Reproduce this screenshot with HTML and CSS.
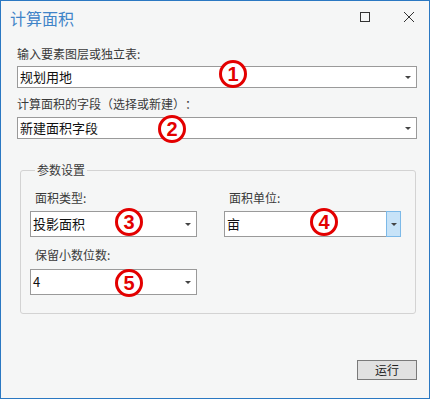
FILE: index.html
```html
<!DOCTYPE html>
<html lang="zh-CN">
<head>
<meta charset="utf-8">
<title>计算面积</title>
<link rel="stylesheet" href="styles.css">
</head>
<body>
<div class="window">
  <div class="titlebar">
    <span class="title">计算面积</span>
    <div class="controls">
      <svg class="ctl" width="12" height="12" viewBox="0 0 12 12"><rect x="1.5" y="1.5" width="9" height="9" fill="none" stroke="#333" stroke-width="1"/></svg>
      <svg class="ctl" width="12" height="12" viewBox="0 0 12 12"><path d="M1 1 L11 11 M11 1 L1 11" stroke="#333" stroke-width="1" fill="none"/></svg>
    </div>
  </div>
  <div class="content">
    <div class="label">输入要素图层或独立表:</div>
    <div class="select wide"><span class="val">规划用地</span><span class="arrow"></span></div>
    <div class="label second">计算面积的字段（选择或新建）：</div>
    <div class="select wide"><span class="val">新建面积字段</span><span class="arrow"></span></div>

    <fieldset class="group">
      <legend>参数设置</legend>
      <div class="grid">
        <div class="field">
          <div class="label sub">面积类型:</div>
          <div class="select tall"><span class="val">投影面积</span><span class="arrow"></span></div>
        </div>
        <div class="field">
          <div class="label sub">面积单位:</div>
          <div class="select tall active"><span class="val">亩</span><span class="btn"><span class="arrow"></span></span></div>
        </div>
        <div class="field row2">
          <div class="label sub">保留小数位数:</div>
          <div class="select tall"><span class="val">4</span><span class="arrow"></span></div>
        </div>
      </div>
    </fieldset>

    <div class="footer"><button class="run">运行</button></div>
  </div>

  <span class="mark m1">1</span>
  <span class="mark m2">2</span>
  <span class="mark m3">3</span>
  <span class="mark m4">4</span>
  <span class="mark m5">5</span>
</div>
</body>
</html>
```
FILE: styles.css
```css
* { box-sizing: border-box; }
html, body { margin: 0; padding: 0; background: #ffffff; }
body { font-family: "Noto Sans CJK SC", "Noto Sans", sans-serif; }

.window {
  position: relative;
  width: 430px;
  height: 399px;
  border: 1px solid #2a78c2;
  background: #f5f6f6;
}

.titlebar {
  height: 34px;
  display: flex;
  align-items: center;
  justify-content: space-between;
  padding: 0 0 0 9px;
}
.title {
  font-size: 16px;
  color: #3f84c8;
  line-height: 20px;
  margin-top: -1px;
}
.controls {
  display: flex;
  align-items: center;
  gap: 32px;
  padding-right: 14px;
  margin-top: -2px;
}
.ctl { display: block; }

.content {
  padding: 11px 0 0 16px;
}

.label {
  font-size: 12px;
  line-height: 16px;
  color: #3a3a3a;
  height: 16px;
  margin-bottom: 4px;
  white-space: nowrap;
}
.label.second { margin-top: 8px; margin-bottom: 5px; text-spacing-trim: space-all; }

.select {
  position: relative;
  display: flex;
  align-items: center;
  background: #fff;
  border: 1px solid #9a9a9a;
  height: 22px;
  padding-left: 2px;
  font-size: 13px;
  color: #111;
}
.select.wide { width: 400px; }
.select.tall { height: 26px; }
.val { flex: 1; line-height: 18px; }

.arrow {
  width: 0;
  height: 0;
  border-left: 3px solid transparent;
  border-right: 3px solid transparent;
  border-top: 3px solid #444;
  margin-right: 5px;
  margin-top: 1px;
}
.select.active { border-right: none; }
.select.active .btn {
  align-self: stretch;
  width: 15px;
  margin: -1px 0;
  background: #c7e3f8;
  border: 1px solid #7cb9e8;
  display: flex;
  align-items: center;
  justify-content: center;
}
.select.active .btn .arrow { margin: 1px 0 0 0; }

.group {
  width: 396px;
  margin: 23px 0 0 3px;
  padding: 12px 0 18px 9px;
  border: 1px solid #d3d3d3;
  border-radius: 3px;
  min-width: 0;
}
.group legend {
  font-size: 12px;
  line-height: 16px;
  color: #3a3a3a;
  padding: 0 2px;
  margin-left: 5px;
}

.grid {
  display: grid;
  grid-template-columns: 167px 177px;
  column-gap: 27px;
  row-gap: 10px;
}
.label.sub { padding-left: 5px; margin-bottom: 5px; }
.row2 .label.sub { margin-bottom: 6px; }
.row2 { grid-column: 1; }

.footer {
  display: flex;
  justify-content: flex-end;
  width: 400px;
  margin-top: 46px;
}
.run {
  width: 60px;
  height: 20px;
  background: #e1e1e1;
  border: 1px solid #7a7a7a;
  font-family: "Noto Sans CJK SC", sans-serif;
  font-size: 12px;
  line-height: 16px;
  color: #222;
  padding: 0;
}

.mark {
  position: absolute;
  width: 28px;
  height: 28px;
  border: 3px solid #e30000;
  border-radius: 50%;
  background: #fff;
  color: #e30000;
  font-family: "Liberation Sans", Arial, sans-serif;
  font-weight: bold;
  font-size: 20px;
  line-height: 22px;
  text-align: center;
}
.m1 { left: 218px; top: 59px; }
.m2 { left: 157px; top: 114px; }
.m3 { left: 114px; top: 207px; }
.m4 { left: 309px; top: 207px; }
.m5 { left: 114px; top: 268px; }
```
